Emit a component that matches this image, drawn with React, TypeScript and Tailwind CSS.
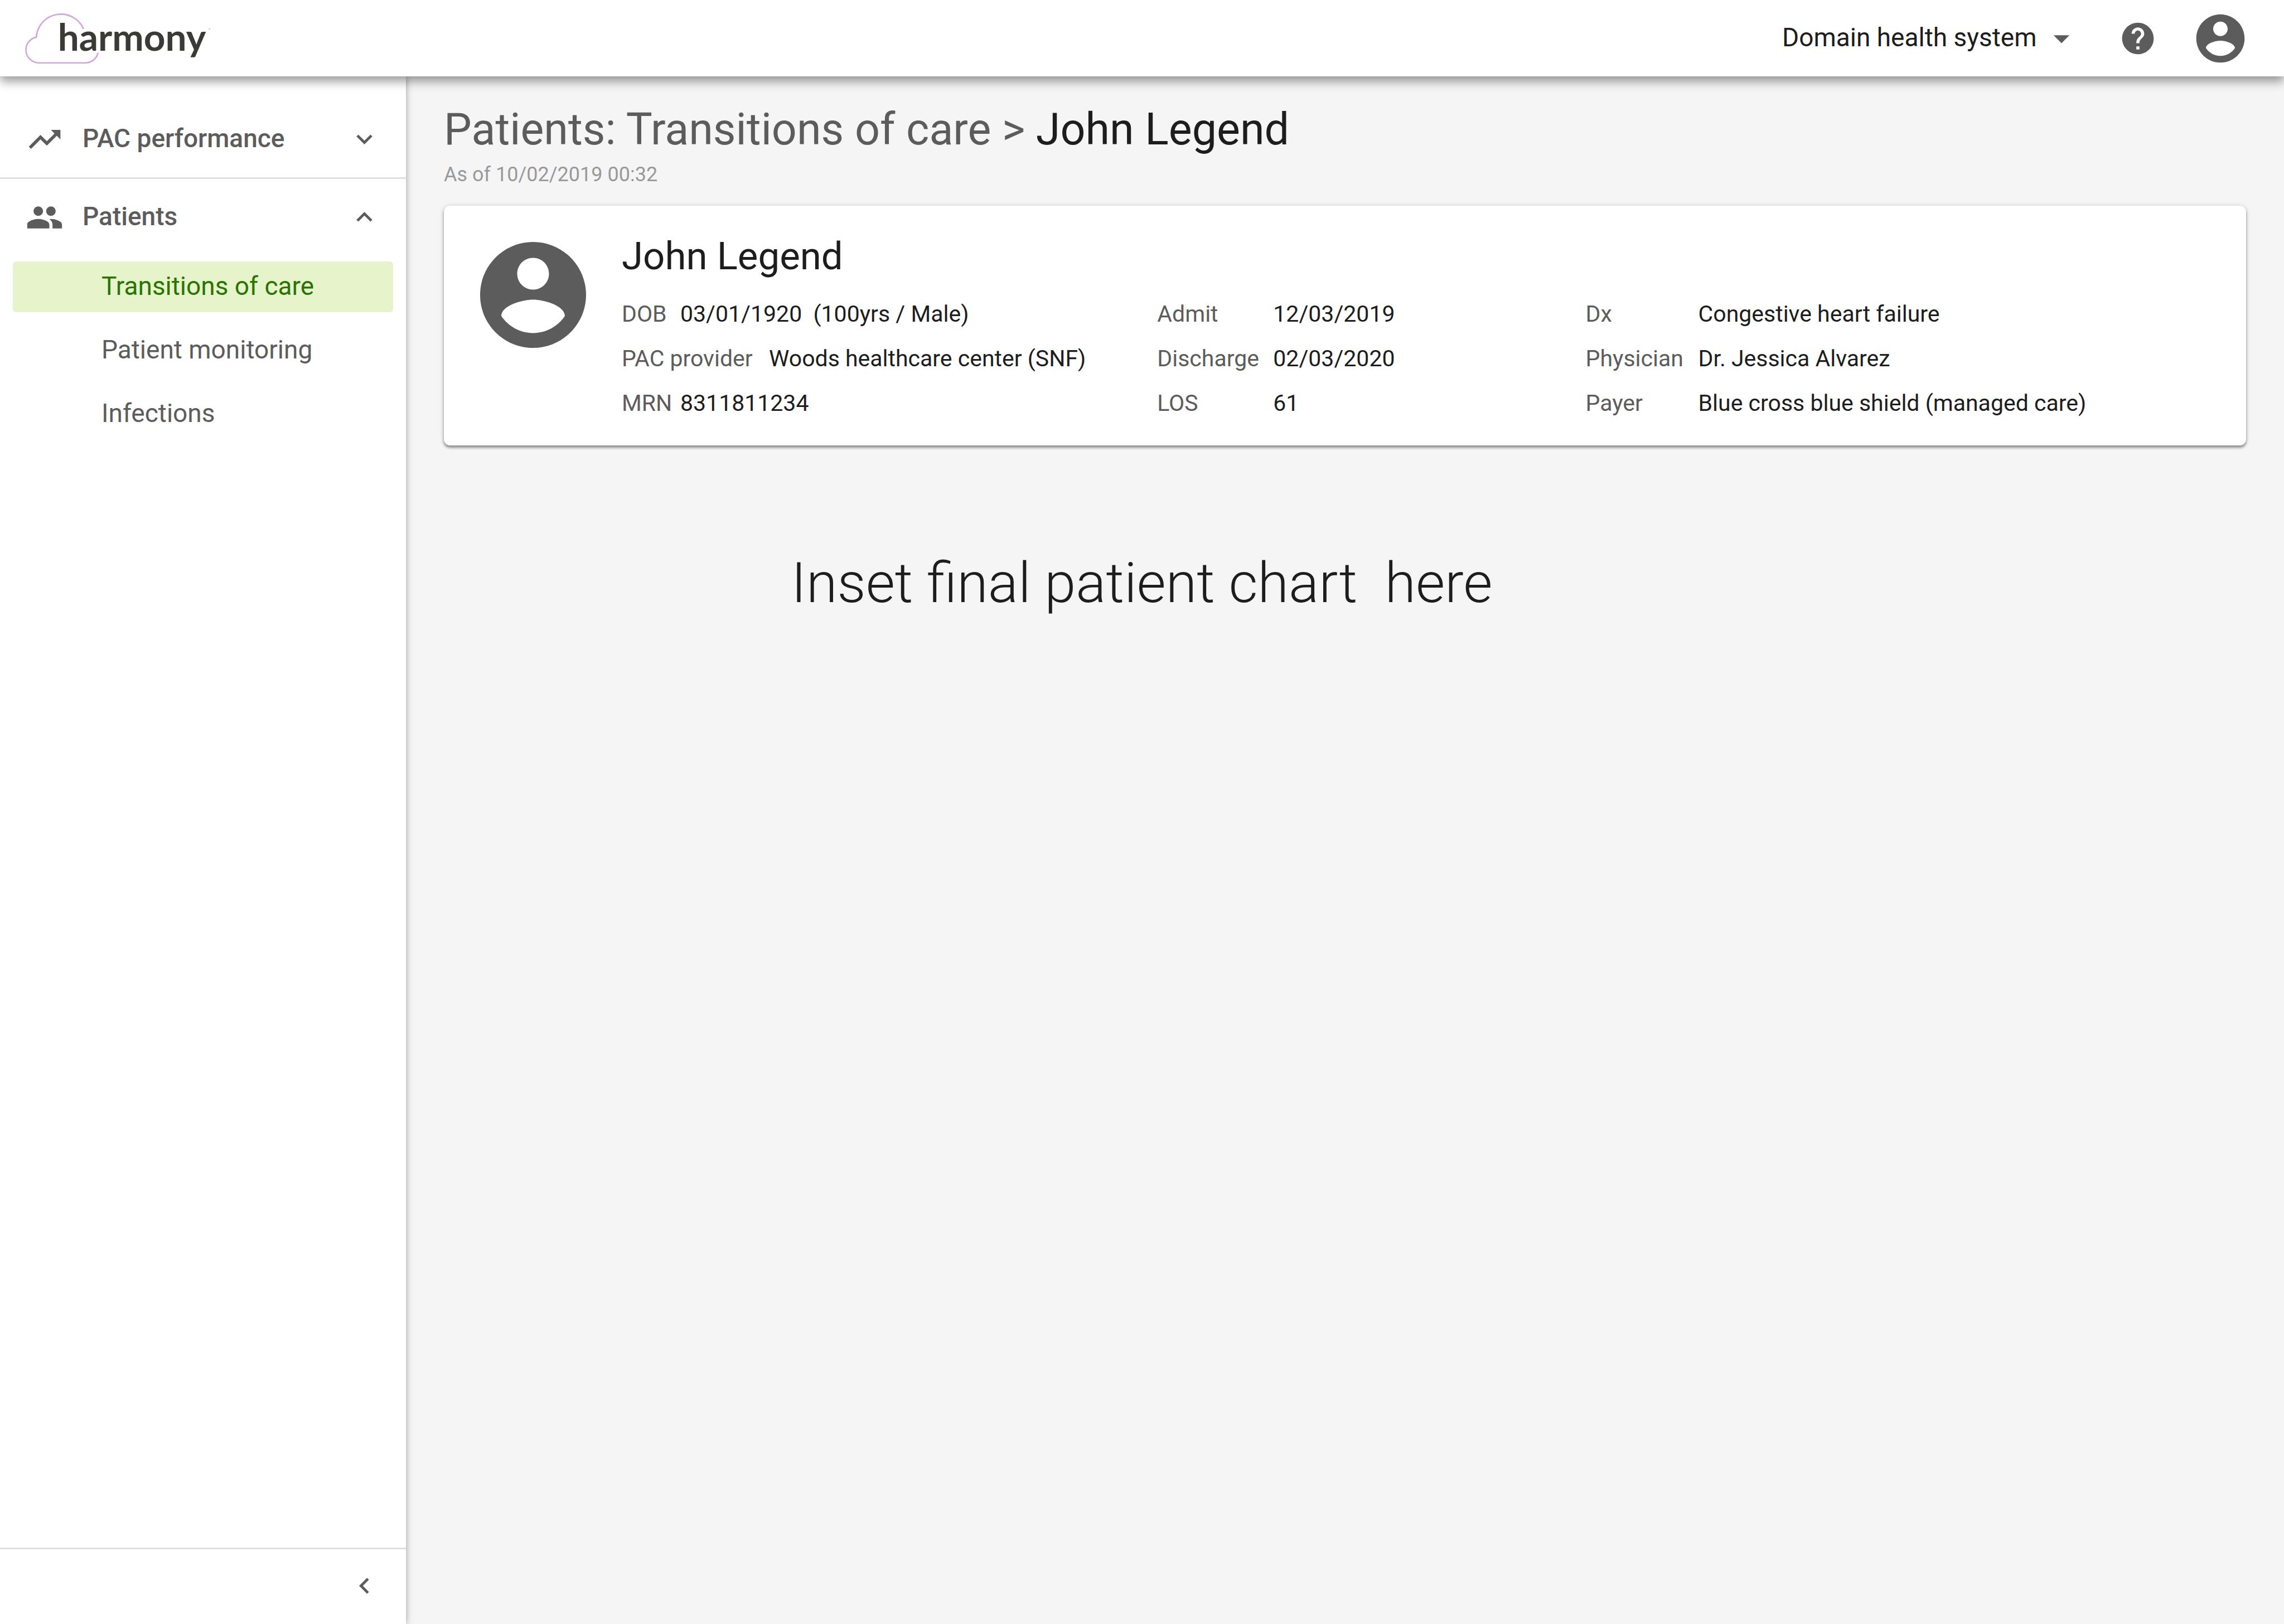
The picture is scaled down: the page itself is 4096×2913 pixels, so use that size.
import type { ReactNode } from "react";
import {
  MdArrowDropDown,
  MdChevronLeft,
  MdExpandLess,
  MdExpandMore,
  MdHelp,
  MdPeople,
  MdTrendingUp,
} from "react-icons/md";

function AccountIcon({ className }: { className: string }) {
  return (
    <svg viewBox="0 0 24 24" fill="currentColor" className={className} aria-hidden="true">
      <path d="M12 2C6.48 2 2 6.48 2 12s4.48 10 10 10 10-4.48 10-10S17.52 2 12 2zm0 3c1.66 0 3 1.34 3 3s-1.34 3-3 3-3-1.34-3-3 1.34-3 3-3zm0 14.2c-2.5 0-4.71-1.28-6-3.22.03-1.99 4-3.08 6-3.08 1.99 0 5.97 1.09 6 3.08-1.29 1.94-3.5 3.22-6 3.22z" />
    </svg>
  );
}

function Logo() {
  return (
    <a href="#" aria-label="harmony" className="block">
      <svg viewBox="0 0 410 144" className="block h-[137px] w-[390px]">
        <path
          d="M157.5 54.5A46.5 46.5 0 0 0 68.5 70A24.5 24.5 0 0 0 73 118.5H161A25 25 0 0 0 185 99.5"
          fill="none"
          stroke="#d6a4e0"
          strokeWidth="2.8"
        />
        <text x="109" y="96" fontFamily="Lato" fontWeight="700" fontSize="71" fill="#3a3b36">
          harmony
        </text>
        <text x="393" y="59" fontFamily="Roboto" fontSize="7" fill="#8a8a8a">
          ™
        </text>
      </svg>
    </a>
  );
}

function Header() {
  return (
    <header className="relative z-20 flex h-[137px] items-center justify-between bg-white pr-[62px] shadow-[0_9px_17px_rgba(0,0,0,0.4)]">
      <Logo />
      <div className="flex items-center">
        <div className="relative mr-[69px] flex items-center">
          <select
            aria-label="Health system"
            className="appearance-none bg-transparent pr-[78px] pb-1 text-[46px] leading-[56px] text-[#1d1d1d]"
          >
            <option>Domain health system</option>
          </select>
          <MdArrowDropDown className="pointer-events-none absolute right-0 size-[68px]" />
        </div>
        <button aria-label="Help" className="mr-[62px]">
          <MdHelp className="size-[68px]" />
        </button>
        <button aria-label="Account">
          <AccountIcon className="size-[104px]" />
        </button>
      </div>
    </header>
  );
}

function NavSection({ icon, label, open }: { icon: ReactNode; label: string; open: boolean }) {
  const Chevron = open ? MdExpandLess : MdExpandMore;
  return (
    <button
      aria-expanded={open}
      className="flex h-[137px] w-full items-center pr-[46px] pl-[46px] text-left text-[46px] leading-[56px] font-medium"
    >
      {icon}
      <span className="ml-[34px] flex-1 pb-1">{label}</span>
      <Chevron className="size-[57px]" />
    </button>
  );
}

const patientLinks = [
  { label: "Transitions of care", active: true },
  { label: "Patient monitoring", active: false },
  { label: "Infections", active: false },
];

function Sidebar() {
  return (
    <aside className="relative z-10 flex w-[728px] shrink-0 flex-col bg-white shadow-[0_0_12px_rgba(0,0,0,0.35)]">
      <nav className="flex-1 pt-11">
        <div className="border-b-[3px] border-[#e0e0e0]">
          <NavSection icon={<MdTrendingUp className="size-[68px]" />} label="PAC performance" open={false} />
        </div>
        <NavSection icon={<MdPeople className="size-[68px]" />} label="Patients" open />
        <ul className="mx-[23px] mt-[11px] flex flex-col gap-[23px]">
          {patientLinks.map((link) => (
            <li key={link.label}>
              <a
                href="#"
                aria-current={link.active ? "page" : undefined}
                className={
                  link.active
                    ? "flex h-[91px] items-center rounded-[6px] bg-[#e6f3cb] pb-1 pl-[159px] text-[46px] leading-[56px] text-[#2a7500]"
                    : "flex h-[91px] items-center rounded-[6px] pb-1 pl-[159px] text-[46px] leading-[56px]"
                }
              >
                {link.label}
              </a>
            </li>
          ))}
        </ul>
      </nav>
      <div className="flex h-[137px] items-center justify-end border-t-[3px] border-[#e0e0e0] pr-[46px] pb-1">
        <button aria-label="Collapse sidebar">
          <MdChevronLeft className="size-[57px]" />
        </button>
      </div>
    </aside>
  );
}

function Field({ label, labelWidth, children }: { label: string; labelWidth: string; children: ReactNode }) {
  return (
    <div className="flex">
      <dt className={labelWidth}>{label}</dt>
      <dd className="text-[#1d1d1d]">{children}</dd>
    </div>
  );
}

function PatientCard() {
  return (
    <section className="mt-8 flex rounded-[11px] bg-white pt-[46px] pb-9 pl-[46px] shadow-[0_4px_4px_rgba(0,0,0,0.35),0_1px_8px_rgba(0,0,0,0.2)]">
      <AccountIcon className="size-[228px] shrink-0" />
      <div className="ml-[45px] flex-1">
        <h2 className="text-[69px] leading-[90px] text-[#1d1d1d]">John Legend</h2>
        <dl className="mt-[18px] grid grid-cols-[960fr_768fr_1184fr] text-[41px] leading-[80px] whitespace-nowrap">
          <div>
            <Field label="DOB" labelWidth="w-[105px]">
              03/01/1920{"\u00a0 "}(100yrs / Male)
            </Field>
            <Field label="PAC provider" labelWidth="w-[264px]">
              Woods healthcare center (SNF)
            </Field>
            <Field label="MRN" labelWidth="w-[105px]">
              8311811234
            </Field>
          </div>
          <div>
            <Field label="Admit" labelWidth="w-[208px]">
              12/03/2019
            </Field>
            <Field label="Discharge" labelWidth="w-[208px]">
              02/03/2020
            </Field>
            <Field label="LOS" labelWidth="w-[208px]">
              61
            </Field>
          </div>
          <div>
            <Field label="Dx" labelWidth="w-[202px]">
              Congestive heart failure
            </Field>
            <Field label="Physician" labelWidth="w-[202px]">
              Dr. Jessica Alvarez
            </Field>
            <Field label="Payer" labelWidth="w-[202px]">
              Blue cross blue shield (managed care)
            </Field>
          </div>
        </dl>
      </div>
    </section>
  );
}

export default function App() {
  return (
    <div className="flex min-h-screen flex-col bg-[#f5f5f5] font-[Roboto,sans-serif] text-[#5c5c5c]">
      <Header />
      <div className="flex flex-1">
        <Sidebar />
        <main className="flex-1 pt-[47px] pr-[68px] pl-[68px]">
          <h1 className="text-[79px] leading-[96px]">
            <a href="#">Patients: Transitions of care</a> &gt; <span className="text-[#1d1d1d]">John Legend</span>
          </h1>
          <p className="mt-[9px] text-[36px] leading-[48px] text-[#999999]">As of 10/02/2019 00:32</p>
          <PatientCard />
          <p className="mt-[187px] ml-[623px] text-[101px] leading-[120px] font-light text-[#1d1d1d]">
            Inset final patient chart{"\u00a0 "}here
          </p>
        </main>
      </div>
    </div>
  );
}
